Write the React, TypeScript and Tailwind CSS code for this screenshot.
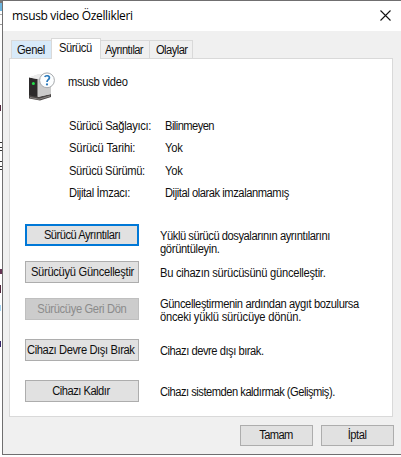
import React from "react";

function Text({ children, className }: { children: React.ReactNode; className: string }) {
  return (
    <span className={`inline-block origin-left scale-x-93 whitespace-nowrap ${className}`}>{children}</span>
  );
}

function Tab({ children, className }: { children: React.ReactNode; className: string }) {
  return (
    <div className={`flex border border-b-0 border-[#d9d9d9] ${className}`}>
      {children}
    </div>
  );
}

function Btn({ children, className, text }: { children: React.ReactNode; className: string; text: string }) {
  return (
    <button className={`flex shrink-0 items-center justify-center ${className}`}>
      <span className={`inline-block scale-x-93 whitespace-nowrap ${text}`}>{children}</span>
    </button>
  );
}

const normal = "h-[22px] w-[114px] border border-[#adadad] bg-[#e1e1e1]";

const info = [
  ["Sürücü Sağlayıcı:", "Bilinmeyen", "h-[22px]", "tracking-[-0.34px]", "tracking-[-0.6px]"],
  ["Sürücü Tarihi:", "Yok", "h-[23px]", "tracking-[-0.13px]", "tracking-[-0.2px]"],
  ["Sürücü Sürümü:", "Yok", "h-[22px]", "tracking-[-0.37px]", "tracking-[-0.2px]"],
  ["Dijital İmzacı:", "Dijital olarak imzalanmamış", "h-[22px]", "tracking-[-0.38px]", "tracking-[-0.47px]"],
];

function Device() {
  return (
    <svg className="block" width="28" height="30" viewBox="0 0 28 30">
      <path d="M2 24 11 25.5 24 22V26L13 29.5 2 27.5Z" fill="#4a4645" />
      <path d="M3 26.5 12 28.2 23 25" fill="none" stroke="#a5a2a1" strokeWidth=".7" />
      <path d="M2 6.5 12 3 24 5V23L11 26Z" fill="#dcdcdc" />
      <path d="M10.5 8 24 5V23L10.5 26Z" fill="#cbcbcb" />
      <path d="M2 6.5 10.5 8V26L2 24.5Z" fill="#2c2a2b" />
      <path d="M2 6.5 12 3 24 5 10.5 8Z" fill="#ececec" />
      <circle cx="6.4" cy="12.5" r="1.5" fill="#22e04a" />
      <circle cx="20" cy="9.3" r="7.4" fill="#fcfeff" stroke="#a6a9ac" strokeWidth="1" />
      <path d="M17.7 5.8C18.5 4.3 22.6 4.2 22.4 6.9C22.3 8.8 20 8.7 20 11" fill="none" stroke="#2878bb" strokeWidth="1.7" />
      <circle cx="20" cy="13.4" r="1.1" fill="#2878bb" />
    </svg>
  );
}

export default function App() {
  return (
    <div className="flex h-[457px] w-[401px] overflow-hidden bg-white font-['Liberation_Sans',Arial,sans-serif] text-[12px] leading-[13px] text-[#101010]">
      <div className="flex h-[457px] w-[2px] shrink-0 flex-col overflow-hidden bg-white">
        <div className="h-[3px] bg-[#777]" />
        <div className="h-[8px] bg-[#6db5df]" />
        <div className="mt-[3px] h-px bg-[#aaa]" />
        <div className="mt-[9px] h-px bg-[#999]" />
        <div className="mt-[80px] h-[6px] w-px bg-[#51243b]" />
        <div className="mt-[31px] h-px bg-[#333]" />
        <div className="mt-[4px] h-px bg-[#333]" />
        <div className="mt-[2px] h-px bg-[#333]" />
        <div className="mt-[10px] h-px bg-[#333]" />
        <div className="mt-[4px] h-px bg-[#333]" />
        <div className="mt-[2px] h-px bg-[#333]" />
        <div className="mt-[99px] h-[5px] w-[2px] bg-[#653454]" />
        <div className="mt-[11px] h-[8px] w-px bg-[#51243b]" />
        <div className="mt-[12px] h-[6px] w-px bg-[#a5d5f5]" />
        <div className="mt-[30px] h-[6px] w-px bg-[#35246a]" />
      </div>
      <div className="flex h-[455px] w-[399px] shrink-0 flex-col border-b border-l border-t border-[#706f70] bg-[#f0f0f0]">
        <div className="flex h-[30px] shrink-0 items-center justify-between bg-white pl-[9px] pr-[10px]">
          <span className="whitespace-nowrap pb-px font-['Open_Sans',sans-serif] text-[12px] tracking-[-0.34px] text-black">msusb video Özellikleri</span>
          <svg className="mb-px block" width="11" height="11" viewBox="0 0 11 11">
            <path d="M.5.5 10.5 10.5M10.5.5.5 10.5" fill="none" stroke="#111" strokeWidth="1.1" />
          </svg>
        </div>
        <div className="relative z-10 -mb-px mt-[7px] flex h-[21px] shrink-0 items-end pl-[8px]">
          <Tab className="mb-px h-[18px] w-[40px] border-r-0 bg-[#d8eaf9] pl-[5px] pt-[3px]"><Text className="tracking-[-0.4px]">Genel</Text></Tab>
          <Tab className="h-[21px] w-[50px] bg-white pl-[7px] pt-[3px]"><Text className="tracking-[-0.47px]">Sürücü</Text></Tab>
          <Tab className="mb-px h-[18px] w-[49px] border-l-0 pl-[4px] pt-[3px]"><Text className="tracking-[-0.7px]">Ayrıntılar</Text></Tab>
          <Tab className="mb-px h-[18px] w-[43px] border-l-0 pl-[6px] pt-[3px]"><Text className="tracking-[-0.6px]">Olaylar</Text></Tab>
        </div>
        <main className="ml-[6px] flex h-[359px] w-[384px] shrink-0 flex-col border border-[#d9d9d9] bg-white">
          <div className="flex h-[56px] shrink-0 pl-[17px] pt-[12px]">
            <Device />
            <Text className="ml-[13px] mt-[5px] tracking-[-0.3px]">msusb video</Text>
          </div>
          <div className="h-[109px] shrink-0 pl-[59px] pt-[5px]">
            {info.map(([label, value, height, a, b]) => (
              <div key={label} className={`flex ${height}`}>
                <div className="w-[96px]"><Text className={a}>{label}</Text></div>
                <div><Text className={b}>{value}</Text></div>
              </div>
            ))}
          </div>
          <div className="flex h-[37px] shrink-0 gap-[21px] pl-[15px]">
            <Btn className="h-[22px] w-[114px] border-2 border-[#0078d7] bg-[#e1e1e1]" text="tracking-[-0.53px]">Sürücü Ayrıntıları</Btn>
            <p className="mt-[6px] flex flex-col items-start">
              <Text className="tracking-[-0.48px]">Yüklü sürücü dosyalarının ayrıntılarını</Text>
              <Text className="tracking-[-0.36px]">görüntüleyin.</Text>
            </p>
          </div>
          <div className="flex h-[37px] shrink-0 gap-[21px] pl-[15px]">
            <Btn className={normal} text="tracking-[-0.31px]">Sürücüyü Güncelleştir</Btn>
            <p className="mt-[6px]"><Text className="tracking-[-0.29px]">Bu cihazın sürücüsünü güncelleştir.</Text></p>
          </div>
          <div className="flex h-[41px] shrink-0 gap-[21px] pl-[15px]">
            <Btn className="h-[22px] w-[114px] border border-[#bfbfbf] bg-[#cccccc] text-[#8b8b8b]" text="tracking-[-0.37px]">Sürücüye Geri Dön</Btn>
            <p className="flex flex-col items-start">
              <Text className="tracking-[-0.42px]">Güncelleştirmenin ardından aygıt bozulursa</Text>
              <Text className="tracking-[-0.23px]">önceki yüklü sürücüye dönün.</Text>
            </p>
          </div>
          <div className="flex h-[41px] shrink-0 gap-[21px] pl-[15px]">
            <Btn className={normal} text="-ml-[2px] tracking-[-0.43px]">Cihazı Devre Dışı Bırak</Btn>
            <p className="mt-[6px]"><Text className="tracking-[-0.5px]">Cihazı devre dışı bırak.</Text></p>
          </div>
          <div className="flex shrink-0 gap-[21px] pl-[15px]">
            <Btn className={normal} text="-ml-[2px] tracking-[-0.53px]">Cihazı Kaldır</Btn>
            <p className="mt-[6px]"><Text className="tracking-[-0.53px]">Cihazı sistemden kaldırmak (Gelişmiş).</Text></p>
          </div>
        </main>
        <div className="mt-[8px] flex gap-[8px] pl-[237px]">
          <Btn className="h-[21px] w-[73px] border border-[#adadad] bg-[#e1e1e1]" text="-ml-px tracking-[-0.7px]">Tamam</Btn>
          <Btn className="h-[21px] w-[73px] border border-[#adadad] bg-[#e1e1e1]" text="-ml-px tracking-[-0.5px]">İptal</Btn>
        </div>
      </div>
    </div>
  );
}
